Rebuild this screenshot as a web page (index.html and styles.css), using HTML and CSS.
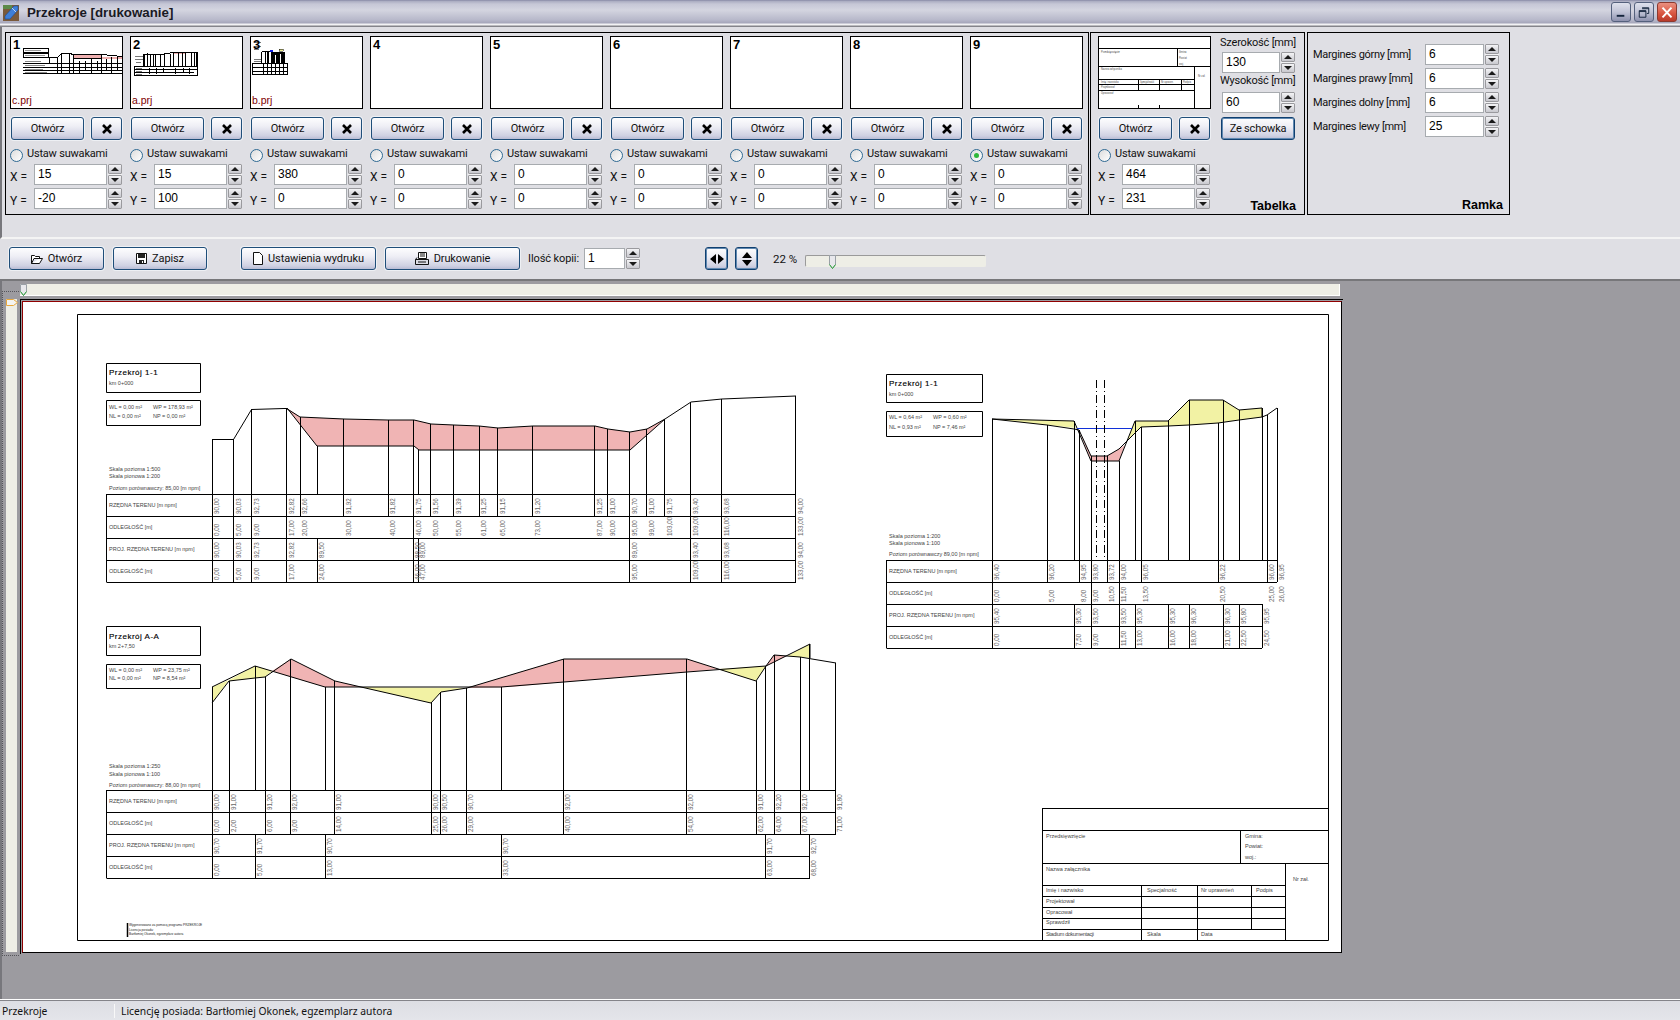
FILE: index.html
```html
<!DOCTYPE html>
<html lang="pl">
<head>
<meta charset="utf-8">
<title>Przekroje [drukowanie]</title>
<link rel="stylesheet" href="styles.css">
</head>
<body>
<header class="titlebar">
  <svg class="appicon" width="16" height="16" viewBox="0 0 16 16"><rect width="16" height="16" fill="#7a5a3c"/><rect x="0" y="0" width="9" height="4" fill="#5c8a4a"/><path d="M2 11 11 1h4v4l-8 9H2z" fill="#3f7fd8" stroke="#1d4a96" stroke-width=".6"/><path d="M9 3l4 4" stroke="#bcd6f6"/></svg>
  <div class="title">Przekroje [drukowanie]</div>
  <div class="winbtns">
    <div class="winbtn"><svg width="19" height="19" viewBox="0 0 19 19"><rect x="5" y="12" width="8" height="2" fill="#14243c"/></svg></div>
    <div class="winbtn"><svg width="19" height="19" viewBox="0 0 19 19"><path d="M7.500 4.500h7v6h-2M4.500 7.500h7v7h-7zM4.500 8.500h7M7.500 5.500h7" fill="none" stroke="#14243c"/></svg></div>
    <div class="winbtn close"><svg width="20" height="19" viewBox="0 0 20 19"><path d="M5 4l10 11M15 4 5 15" stroke="#fff" stroke-width="2.200"/></svg></div>
  </div>
</header>

<section class="panel">
  <div class="group slots">
    <div class="slot">
      <div class="thumb"><svg class="mini" width="111" height="71" viewBox="0 0 111 71"><path d="M62 18h28v3H62zM91 20h20v2H91z" fill="#efb0b0"/><path d="M12.500 11.500h25v4h-25zM12.500 16.500h25v4h-25z" fill="none" stroke="#000"/><path d="M14 13h16M14 18h20" stroke="#999"/><path d="M12 26.500h99M12 30.500h99M12 33.500h99M12 36.500h99M38.500 27V20.500H46.500L50.500 16.500H58.500L62.500 17.500H90.500L111 19.500M62 21.500H90" fill="none" stroke="#000"/><path d="M46.500 20v16M50.500 17v19M58.500 17v19M62.500 18v18M68.500 24v12M74.500 24v10M80.500 22v14M86.500 24v10M90.500 18v18M95.500 22v12M100.500 20v16M106.500 20v14" stroke="#000"/><path d="M14 28h20M14 32h18M14 35h22M14 24h16" stroke="#888"/></svg><b class="num">1</b><span class="name">c.prj</span></div>
      <div class="btnrow"><div class="btn open">Otwórz</div><div class="btn del"><svg width="12" height="12" viewBox="0 0 12 12"><path d="M2 2l8 8M10 2l-8 8" stroke="#000" stroke-width="2.600"/></svg></div></div>
      <div class="radiorow"><span class="radio"></span><span class="rtext">Ustaw suwakami</span></div>
      <div class="coord"><span class="lab">X =</span><div class="input">15</div><div class="spin"><i class="up"></i><i class="dn"></i></div></div>
      <div class="coord"><span class="lab">Y =</span><div class="input">-20</div><div class="spin"><i class="up"></i><i class="dn"></i></div></div>
    </div>
    <div class="slot">
      <div class="thumb"><svg class="mini" width="111" height="71" viewBox="0 0 111 71"><path d="M42 15h12v2H42z" fill="#efb0b0"/><path d="M3.500 29.500h63v9h-63zM3 32.500h64M3 35.500h60M12.500 29V17.500H30.500L42.500 15.500H54.500L60.500 15.500H66.500V29" fill="none" stroke="#000"/><path d="M13.500 17v12M16.500 16v13M19.500 17v12M22.500 17v12M24.500 18v11M29.500 18v11M33.500 17v12M39.500 17v12M42.500 16v13M47.500 16v13M51.500 16v13M54.500 16v13M60.500 16v13M63.500 16v13M65.500 16v13" stroke="#000"/><path d="M5 31h6M5 34h6M5 37h6M4 19h8M4 22h8M5 25h5" stroke="#777"/><path d="M18 31v6M25 31v6M32 31v4M44 31v6M52 31v4M58 31v6" stroke="#000"/></svg><b class="num">2</b><span class="name">a.prj</span></div>
      <div class="btnrow"><div class="btn open">Otwórz</div><div class="btn del"><svg width="12" height="12" viewBox="0 0 12 12"><path d="M2 2l8 8M10 2l-8 8" stroke="#000" stroke-width="2.600"/></svg></div></div>
      <div class="radiorow"><span class="radio"></span><span class="rtext">Ustaw suwakami</span></div>
      <div class="coord"><span class="lab">X =</span><div class="input">15</div><div class="spin"><i class="up"></i><i class="dn"></i></div></div>
      <div class="coord"><span class="lab">Y =</span><div class="input">100</div><div class="spin"><i class="up"></i><i class="dn"></i></div></div>
    </div>
    <div class="slot">
      <div class="thumb"><svg class="mini" width="111" height="71" viewBox="0 0 111 71"><path d="M16 15h18v11H16z" fill="#000"/><path d="M18 15h2v11h-2zM24 18h1v8h-1zM29 17h1v9h-1z" fill="#fff"/><path d="M10.500 14.500h8" stroke="#000"/><path d="M19 14h3" stroke="#1020e0" stroke-width="2"/><path d="M28 12h4v2h-4z" fill="#efef90" stroke="#000" stroke-width=".5"/><path d="M1.500 26.500h35v11h-35zM1 30.500h36M1 34.500h36" fill="none" stroke="#000"/><path d="M10.500 14.500v12M14.500 14.500v12M12 27v10M16 27v10M20 27v10M24 27v10M28 27v10M32 27v10" stroke="#000"/><path d="M3 5h7M3 9h7M3 12h5M3 22h7M3 24h7" stroke="#777"/></svg><b class="num">3</b><span class="name">b.prj</span></div>
      <div class="btnrow"><div class="btn open">Otwórz</div><div class="btn del"><svg width="12" height="12" viewBox="0 0 12 12"><path d="M2 2l8 8M10 2l-8 8" stroke="#000" stroke-width="2.600"/></svg></div></div>
      <div class="radiorow"><span class="radio"></span><span class="rtext">Ustaw suwakami</span></div>
      <div class="coord"><span class="lab">X =</span><div class="input">380</div><div class="spin"><i class="up"></i><i class="dn"></i></div></div>
      <div class="coord"><span class="lab">Y =</span><div class="input">0</div><div class="spin"><i class="up"></i><i class="dn"></i></div></div>
    </div>
    <div class="slot">
      <div class="thumb"><b class="num">4</b></div>
      <div class="btnrow"><div class="btn open">Otwórz</div><div class="btn del"><svg width="12" height="12" viewBox="0 0 12 12"><path d="M2 2l8 8M10 2l-8 8" stroke="#000" stroke-width="2.600"/></svg></div></div>
      <div class="radiorow"><span class="radio"></span><span class="rtext">Ustaw suwakami</span></div>
      <div class="coord"><span class="lab">X =</span><div class="input">0</div><div class="spin"><i class="up"></i><i class="dn"></i></div></div>
      <div class="coord"><span class="lab">Y =</span><div class="input">0</div><div class="spin"><i class="up"></i><i class="dn"></i></div></div>
    </div>
    <div class="slot">
      <div class="thumb"><b class="num">5</b></div>
      <div class="btnrow"><div class="btn open">Otwórz</div><div class="btn del"><svg width="12" height="12" viewBox="0 0 12 12"><path d="M2 2l8 8M10 2l-8 8" stroke="#000" stroke-width="2.600"/></svg></div></div>
      <div class="radiorow"><span class="radio"></span><span class="rtext">Ustaw suwakami</span></div>
      <div class="coord"><span class="lab">X =</span><div class="input">0</div><div class="spin"><i class="up"></i><i class="dn"></i></div></div>
      <div class="coord"><span class="lab">Y =</span><div class="input">0</div><div class="spin"><i class="up"></i><i class="dn"></i></div></div>
    </div>
    <div class="slot">
      <div class="thumb"><b class="num">6</b></div>
      <div class="btnrow"><div class="btn open">Otwórz</div><div class="btn del"><svg width="12" height="12" viewBox="0 0 12 12"><path d="M2 2l8 8M10 2l-8 8" stroke="#000" stroke-width="2.600"/></svg></div></div>
      <div class="radiorow"><span class="radio"></span><span class="rtext">Ustaw suwakami</span></div>
      <div class="coord"><span class="lab">X =</span><div class="input">0</div><div class="spin"><i class="up"></i><i class="dn"></i></div></div>
      <div class="coord"><span class="lab">Y =</span><div class="input">0</div><div class="spin"><i class="up"></i><i class="dn"></i></div></div>
    </div>
    <div class="slot">
      <div class="thumb"><b class="num">7</b></div>
      <div class="btnrow"><div class="btn open">Otwórz</div><div class="btn del"><svg width="12" height="12" viewBox="0 0 12 12"><path d="M2 2l8 8M10 2l-8 8" stroke="#000" stroke-width="2.600"/></svg></div></div>
      <div class="radiorow"><span class="radio"></span><span class="rtext">Ustaw suwakami</span></div>
      <div class="coord"><span class="lab">X =</span><div class="input">0</div><div class="spin"><i class="up"></i><i class="dn"></i></div></div>
      <div class="coord"><span class="lab">Y =</span><div class="input">0</div><div class="spin"><i class="up"></i><i class="dn"></i></div></div>
    </div>
    <div class="slot">
      <div class="thumb"><b class="num">8</b></div>
      <div class="btnrow"><div class="btn open">Otwórz</div><div class="btn del"><svg width="12" height="12" viewBox="0 0 12 12"><path d="M2 2l8 8M10 2l-8 8" stroke="#000" stroke-width="2.600"/></svg></div></div>
      <div class="radiorow"><span class="radio"></span><span class="rtext">Ustaw suwakami</span></div>
      <div class="coord"><span class="lab">X =</span><div class="input">0</div><div class="spin"><i class="up"></i><i class="dn"></i></div></div>
      <div class="coord"><span class="lab">Y =</span><div class="input">0</div><div class="spin"><i class="up"></i><i class="dn"></i></div></div>
    </div>
    <div class="slot">
      <div class="thumb"><b class="num">9</b></div>
      <div class="btnrow"><div class="btn open">Otwórz</div><div class="btn del"><svg width="12" height="12" viewBox="0 0 12 12"><path d="M2 2l8 8M10 2l-8 8" stroke="#000" stroke-width="2.600"/></svg></div></div>
      <div class="radiorow"><span class="radio on"></span><span class="rtext">Ustaw suwakami</span></div>
      <div class="coord"><span class="lab">X =</span><div class="input">0</div><div class="spin"><i class="up"></i><i class="dn"></i></div></div>
      <div class="coord"><span class="lab">Y =</span><div class="input">0</div><div class="spin"><i class="up"></i><i class="dn"></i></div></div>
    </div>
  </div>

  <div class="group tabelka">
    <div class="slot">
      <div class="thumb"><svg class="mini" width="111" height="71" viewBox="0 0 111 71">
        <path d="M0 11.500h111M0 29.500h111M78.500 11v18M95.500 29v41M0 42.500h95M0 47.500h95M0 53.500h95M39.500 42v12M60.500 42v12M82.500 42v12M39.500 68v3M60.500 68v3M95.500 68v3" fill="none" stroke="#000"/>
        <g class="tiny"><text x="2" y="16">Przedsięwzięcie</text><text x="80" y="16">Gmina</text><text x="80" y="22">Powiat</text><text x="80" y="28">woj.</text><text x="2" y="33">Nazwa załącznika</text><text x="99" y="40">Nr zał.</text><text x="2" y="46">Imię i nazwisko</text><text x="41" y="46">Specjalność</text><text x="62" y="46">Nr uprawn.</text><text x="84" y="46">Podpis</text><text x="2" y="51">Projektował</text><text x="2" y="57">Opracował</text></g>
      </svg></div>
      <div class="btnrow"><div class="btn open">Otwórz</div><div class="btn del"><svg width="12" height="12" viewBox="0 0 12 12"><path d="M2 2l8 8M10 2l-8 8" stroke="#000" stroke-width="2.600"/></svg></div></div>
      <div class="radiorow"><span class="radio"></span><span class="rtext">Ustaw suwakami</span></div>
      <div class="coord"><span class="lab">X =</span><div class="input">464</div><div class="spin"><i class="up"></i><i class="dn"></i></div></div>
      <div class="coord"><span class="lab">Y =</span><div class="input">231</div><div class="spin"><i class="up"></i><i class="dn"></i></div></div>
    </div>
    <div class="sizecol">
      <div class="sizelab">Szerokość [mm]</div>
      <div class="sizefield first"><div class="input">130</div><div class="spin"><i class="up"></i><i class="dn"></i></div></div>
      <div class="sizelab">Wysokość [mm]</div>
      <div class="sizefield second"><div class="input">60</div><div class="spin"><i class="up"></i><i class="dn"></i></div></div>
      <div class="btn dflt schowek">Ze schowka</div>
      <div class="caption">Tabelka</div>
    </div>
  </div>

  <div class="group ramka">
    <div class="marg"><span class="marglab">Margines górny [mm]</span><div class="input">6</div><div class="spin"><i class="up"></i><i class="dn"></i></div></div>
    <div class="marg"><span class="marglab">Margines prawy [mm]</span><div class="input">6</div><div class="spin"><i class="up"></i><i class="dn"></i></div></div>
    <div class="marg"><span class="marglab">Margines dolny [mm]</span><div class="input">6</div><div class="spin"><i class="up"></i><i class="dn"></i></div></div>
    <div class="marg"><span class="marglab">Margines lewy [mm]</span><div class="input">25</div><div class="spin"><i class="up"></i><i class="dn"></i></div></div>
    <div class="caption">Ramka</div>
  </div>
</section>

<section class="toolbar">
  <div class="btn tool t-open"><svg width="12" height="12" viewBox="0 0 12 12"><path d="M.5 10.500v-8h3l1 1h4v2M.5 10.500h8l3-5H3z" fill="#fff" stroke="#111"/></svg><span>Otwórz</span></div>
  <div class="btn tool t-save"><svg width="11" height="11" viewBox="0 0 11 11"><path d="M.5.500h10v10H.5z" fill="#fff" stroke="#111"/><path d="M2 1h7v4H2zM3 7h5v3H3z" fill="#222"/><path d="M6 8h1v2H6z" fill="#fff"/></svg><span>Zapisz</span></div>
  <div class="btn tool t-page"><svg width="10" height="13" viewBox="0 0 10 13"><path d="M.5.500h6l3 3v9H.5z" fill="#fff" stroke="#111"/></svg><span>Ustawienia wydruku</span></div>
  <div class="btn tool t-print"><svg width="14" height="13" viewBox="0 0 14 13"><path d="M3.500.500h8v6h-8z" fill="#fff" stroke="#111"/><path d="M5 2h5M5 4h5" stroke="#111"/><path d="M.5 7.500h13v5H.5zM2 5.500l-1.500 2" fill="#dcdce4" stroke="#111"/><path d="M3 10h8" stroke="#111"/></svg><span>Drukowanie</span></div>
  <span class="copies">Ilość kopii:</span>
  <div class="input copyinput">1</div>
  <div class="spin copyspin"><i class="up"></i><i class="dn"></i></div>
  <div class="btn dflt square fit-w"><svg width="14" height="10" viewBox="0 0 14 10"><path d="M6 0v10L0 5zM8 0v10l6-5z" fill="#000"/></svg></div>
  <div class="btn dflt square fit-h"><svg width="10" height="14" viewBox="0 0 10 14"><path d="M0 6h10L5 0zM0 8h10l-5 6z" fill="#000"/></svg></div>
  <span class="zoom">22 %</span>
  <div class="slider"><svg class="sliderthumb" width="7" height="14" viewBox="0 0 7 14"><path d="M.5.500h6v9l-3 4-3-4z" fill="#e8e8ec" stroke="#9aa0a6"/><path d="M.5 9.500l3 4 3-4" fill="none" stroke="#2fa83c"/></svg></div>
</section>

<main class="workspace">
  <div class="guide"></div>
  <div class="hruler"><svg class="hmark" width="7" height="12" viewBox="0 0 7 12"><path d="M.5.500h6v7l-3 4-3-4z" fill="#e8e8ec" stroke="#9aa0a6"/><path d="M.5 7.500l3 4 3-4" fill="none" stroke="#2fa83c"/></svg></div>
  <div class="sheetrow">
    <div class="vruler"><svg class="vmark" width="12" height="7" viewBox="0 0 12 7"><path d="M.5.500h7l4 3-4 3h-7z" fill="#f4f4f0" stroke="#e8a83c"/></svg></div>
    <div class="paper">
      <div class="sheet">
<svg class="drawing" width="1318" height="650" viewBox="23 302 1318 650">
<path class="ln" d="M77.500 314.500H1328.500V940.500H77.500z"/>

<!-- section 1-1 (left, upper) -->
<path class="pink" d="M287 408L300 417 344 419 388 420 414 420 431 424 454 425 479 426 498 428 533 426 595 426 608 429 630 432 647 429 665 419 630 450 419 450 414 446 317 446z"/>
<path class="ln" d="M106.500 363.500H200.500V392.500H106.500zM106.500 400.500H200.500V425.500H106.500z"/>
<path class="ln" d="M212.500 439.500H233.500L251.500 409.500 284 408.500 286.500 408.500 300 417 344 419 388 420 414 420 431 424 454 425 479 426 498 428 533 426 595 426 608 429 630 432 647 429 665 419 691 402 722 399 796 396M287 408L317 446H414L419 450H630L665 419"/>
<path class="ln" d="M212.500 439V538M233.500 439V538M251.500 409V538M286.500 408V538M300.500 417V516M317.500 446V494M343.500 419V516M388.500 420V516M413.500 420V538M418.500 450V494M430.500 424V516M453.500 425V516M479.500 426V516M497.500 428V516M532.500 426V516M594.500 426V516M607.500 429V516M629.500 432V538M646.500 429V516M664.500 419V516M690.500 402V538M721.500 399V538M795.500 396V538"/>
<path class="ln" d="M212.500 538V582M233.500 538V582M251.500 538V582M286.500 538V582M317.500 538V582M413.500 538V582M418.500 538V582M629.500 538V582M690.500 538V582M721.500 538V582M795.500 538V582"/>
<path class="ln" d="M106.500 494.500H796M106.500 516.500H796M106.500 538.500H796M106.500 560.500H796M106.500 582.500H796M106.500 494V582"/>
<g class="head"><text x="109" y="375">Przekrój 1-1</text></g>
<g class="lbl"><text x="109" y="385">km 0+000</text><text x="109" y="409">WL = 0,00 m²</text><text x="153" y="409">WP = 178,93 m²</text><text x="109" y="418">NL = 0,00 m²</text><text x="153" y="418">NP = 0,00 m²</text><text x="109" y="471">Skala pozioma 1:500</text><text x="109" y="478">Skala pionowa 1:200</text><text x="109" y="490">Poziom porównawczy: 85,00 [m npm]</text><text x="109" y="507">RZĘDNA TERENU [m npm]</text><text x="109" y="529">ODLEGŁOŚĆ [m]</text><text x="109" y="551">PROJ. RZĘDNA TERENU [m npm]</text><text x="109" y="573">ODLEGŁOŚĆ [m]</text></g>
<g class="n" transform="translate(1,3)">
<text transform="translate(218,511) rotate(-90)">90,00</text><text transform="translate(240,511) rotate(-90)">90,03</text><text transform="translate(258,511) rotate(-90)">92,73</text><text transform="translate(293,511) rotate(-90)">92,82</text><text transform="translate(306,511) rotate(-90)">92,66</text><text transform="translate(350,511) rotate(-90)">91,92</text><text transform="translate(394,511) rotate(-90)">91,82</text><text transform="translate(420,511) rotate(-90)">91,75</text><text transform="translate(437,511) rotate(-90)">91,56</text><text transform="translate(460,511) rotate(-90)">91,39</text><text transform="translate(485,511) rotate(-90)">91,25</text><text transform="translate(504,511) rotate(-90)">91,15</text><text transform="translate(539,511) rotate(-90)">91,20</text><text transform="translate(601,511) rotate(-90)">91,25</text><text transform="translate(614,511) rotate(-90)">91,00</text><text transform="translate(636,511) rotate(-90)">90,70</text><text transform="translate(653,511) rotate(-90)">91,00</text><text transform="translate(671,511) rotate(-90)">91,75</text><text transform="translate(697,511) rotate(-90)">93,40</text><text transform="translate(728,511) rotate(-90)">93,68</text><text transform="translate(802,511) rotate(-90)">94,00</text>
<text transform="translate(218,533) rotate(-90)">0,00</text><text transform="translate(240,533) rotate(-90)">5,00</text><text transform="translate(258,533) rotate(-90)">9,00</text><text transform="translate(293,533) rotate(-90)">17,00</text><text transform="translate(306,533) rotate(-90)">20,00</text><text transform="translate(350,533) rotate(-90)">30,00</text><text transform="translate(394,533) rotate(-90)">40,00</text><text transform="translate(420,533) rotate(-90)">46,00</text><text transform="translate(437,533) rotate(-90)">50,00</text><text transform="translate(460,533) rotate(-90)">55,00</text><text transform="translate(485,533) rotate(-90)">61,00</text><text transform="translate(504,533) rotate(-90)">65,00</text><text transform="translate(539,533) rotate(-90)">73,00</text><text transform="translate(601,533) rotate(-90)">87,00</text><text transform="translate(614,533) rotate(-90)">90,00</text><text transform="translate(636,533) rotate(-90)">95,00</text><text transform="translate(653,533) rotate(-90)">99,00</text><text transform="translate(671,533) rotate(-90)">103,00</text><text transform="translate(697,533) rotate(-90)">109,00</text><text transform="translate(728,533) rotate(-90)">116,00</text><text transform="translate(802,533) rotate(-90)">133,00</text>
<text transform="translate(218,555) rotate(-90)">90,00</text><text transform="translate(240,555) rotate(-90)">90,03</text><text transform="translate(258,555) rotate(-90)">92,73</text><text transform="translate(293,555) rotate(-90)">92,82</text><text transform="translate(323,555) rotate(-90)">89,50</text><text transform="translate(419,555) rotate(-90)">88,50</text><text transform="translate(424,555) rotate(-90)">89,00</text><text transform="translate(636,555) rotate(-90)">89,00</text><text transform="translate(697,555) rotate(-90)">93,40</text><text transform="translate(728,555) rotate(-90)">93,68</text><text transform="translate(802,555) rotate(-90)">94,00</text>
<text transform="translate(218,577) rotate(-90)">0,00</text><text transform="translate(240,577) rotate(-90)">5,00</text><text transform="translate(258,577) rotate(-90)">9,00</text><text transform="translate(293,577) rotate(-90)">17,00</text><text transform="translate(323,577) rotate(-90)">24,00</text><text transform="translate(419,577) rotate(-90)">46,00</text><text transform="translate(424,577) rotate(-90)">47,00</text><text transform="translate(636,577) rotate(-90)">95,00</text><text transform="translate(697,577) rotate(-90)">109,00</text><text transform="translate(728,577) rotate(-90)">116,00</text><text transform="translate(802,577) rotate(-90)">133,00</text>
</g>

<!-- section A-A (left, lower) -->
<path class="yellow" d="M212 687L229 680 212 703zM229 680L255 666 272 671 265 677 255 678 229 681zM361 687L431 703 441 692 467 688zM718 669L766 666 756 681zM787 656L810 644 810 658z"/>
<path class="pink" d="M272 671L291 659 335 681 361 687 325 687 291 677zM467 688L564 659 687 659 718 669 687 672 564 682 511 687zM766 666L774 655 787 656z"/>
<path class="ln" d="M106.500 626.500H200.500V655.500H106.500zM106.500 664.500H200.500V688.500H106.500z"/>
<path class="ln" d="M212 703L229 681 255 678 265 677 291 659 335 681 361 687 431 703 441 692 467 688 564 659 687 659 756 681 766 666 774 655 800 657 836 663M212 687L255 666 325 687H501L564 682 687 672 766 666 810 644V658"/>
<path class="ln" d="M212.500 687V834M229.500 681V834M255.500 666V790M265.500 677V834M290.500 659V834M325.500 687V790M334.500 681V834M431.500 703V834M440.500 692V834M466.500 688V834M501.500 687V790M563.500 659V834M686.500 659V834M756.500 681V834M765.500 666V790M774.500 655V834M800.500 657V834M809.500 644V790M835.500 663V834"/>
<path class="ln" d="M212.500 834V878M255.500 834V878M325.500 834V878M501.500 834V878M765.500 834V878M809.500 834V878"/>
<path class="ln" d="M106.500 790.500H836M106.500 812.500H836M106.500 834.500H836M106.500 856.500H810M106.500 878.500H810M106.500 790V878"/>
<g class="head"><text x="109" y="639">Przekrój A-A</text></g>
<g class="lbl"><text x="109" y="648">km 2+7,50</text><text x="109" y="672">WL = 0,00 m²</text><text x="153" y="672">WP = 23,75 m²</text><text x="109" y="680">NL = 0,00 m²</text><text x="153" y="680">NP = 8,54 m²</text><text x="109" y="768">Skala pozioma 1:250</text><text x="109" y="776">Skala pionowa 1:100</text><text x="109" y="787">Poziom porównawczy: 88,00 [m npm]</text><text x="109" y="803">RZĘDNA TERENU [m npm]</text><text x="109" y="825">ODLEGŁOŚĆ [m]</text><text x="109" y="847">PROJ. RZĘDNA TERENU [m npm]</text><text x="109" y="869">ODLEGŁOŚĆ [m]</text></g>
<g class="n" transform="translate(1,3)">
<text transform="translate(218,807) rotate(-90)">90,00</text><text transform="translate(235,807) rotate(-90)">91,00</text><text transform="translate(271,807) rotate(-90)">91,20</text><text transform="translate(296,807) rotate(-90)">92,00</text><text transform="translate(340,807) rotate(-90)">91,00</text><text transform="translate(437,807) rotate(-90)">90,00</text><text transform="translate(446,807) rotate(-90)">90,50</text><text transform="translate(472,807) rotate(-90)">90,70</text><text transform="translate(569,807) rotate(-90)">92,00</text><text transform="translate(692,807) rotate(-90)">92,00</text><text transform="translate(762,807) rotate(-90)">91,00</text><text transform="translate(780,807) rotate(-90)">92,20</text><text transform="translate(806,807) rotate(-90)">92,10</text><text transform="translate(841,807) rotate(-90)">91,80</text>
<text transform="translate(218,829) rotate(-90)">0,00</text><text transform="translate(235,829) rotate(-90)">2,00</text><text transform="translate(271,829) rotate(-90)">6,00</text><text transform="translate(296,829) rotate(-90)">9,00</text><text transform="translate(340,829) rotate(-90)">14,00</text><text transform="translate(437,829) rotate(-90)">25,00</text><text transform="translate(446,829) rotate(-90)">26,00</text><text transform="translate(472,829) rotate(-90)">29,00</text><text transform="translate(569,829) rotate(-90)">40,00</text><text transform="translate(692,829) rotate(-90)">54,00</text><text transform="translate(762,829) rotate(-90)">62,00</text><text transform="translate(780,829) rotate(-90)">64,00</text><text transform="translate(806,829) rotate(-90)">67,00</text><text transform="translate(841,829) rotate(-90)">71,00</text>
<text transform="translate(218,851) rotate(-90)">90,70</text><text transform="translate(261,851) rotate(-90)">91,70</text><text transform="translate(331,851) rotate(-90)">90,70</text><text transform="translate(507,851) rotate(-90)">90,70</text><text transform="translate(771,851) rotate(-90)">91,70</text><text transform="translate(815,851) rotate(-90)">92,70</text>
<text transform="translate(218,873) rotate(-90)">0,00</text><text transform="translate(261,873) rotate(-90)">5,00</text><text transform="translate(331,873) rotate(-90)">13,00</text><text transform="translate(507,873) rotate(-90)">33,00</text><text transform="translate(771,873) rotate(-90)">63,00</text><text transform="translate(815,873) rotate(-90)">68,00</text>
</g>
<path d="M127.500 923V937" stroke="#000" stroke-width="1.500"/>
<g class="micro"><text x="129" y="926">Wygenerowano za pomocą programu PRZEKROJE</text><text x="129" y="931">Licencja posiada:</text><text x="129" y="935">Bartłomiej Okonek, egzemplarz autora</text></g>

<!-- section 1-1 (right) -->
<path class="yellow" d="M992 419L1074 421 1076 428 1047 425zM1135 421H1168L1189 400H1223L1239 410 1262 408V417L1239 420 1218 423 1189 425 1168 426 1141 427 1127 441z"/>
<path class="pink" d="M1079 430L1091 456 1107 456 1119 449 1125 445 1119 461H1091z"/>
<path class="ln" d="M886.500 374.500H982.500V402.500H886.500zM886.500 411.500H982.500V436.500H886.500z"/>
<path class="ln" d="M992 419L1047 425 1074 429 1079 430 1091 456 1107 456 1119 449 1127 441 1141 427 1168 426 1189 425 1218 423 1239 420 1262 417 1267 415 1277 408V408M992 419L1074 421 1091 461H1119L1135 421H1168L1189 400H1223L1239 410 1262 408V417"/>
<path d="M1077 428.500H1132" stroke="#1030d8" stroke-width="1" fill="none"/>
<path class="dash" d="M1096.500 380V560M1104.500 380V560"/>
<path class="ln" d="M992.500 419V604M1047.500 425V582M1074.500 421V560M1079.500 430V582M1091.500 456V604M1107.500 456V582M1119.500 461V604M1135.500 421V560M1141.500 427V582M1168.500 421V560M1189.500 400V560M1218.500 423V582M1223.500 400V560M1239.500 410V560M1262.500 408V560M1267.500 415V582M1277.500 408V582"/>
<path class="ln" d="M992.500 604V648M1074.500 604V648M1091.500 604V648M1119.500 604V648M1135.500 604V648M1168.500 604V648M1189.500 604V648M1223.500 604V648M1239.500 604V648M1262.500 604V648"/>
<path class="ln" d="M886.500 560.500H1277M886.500 582.500H1277M886.500 604.500H1262M886.500 626.500H1262M886.500 648.500H1262M886.500 560V648"/>
<g class="head"><text x="889" y="386">Przekrój 1-1</text></g>
<g class="lbl"><text x="889" y="396">km 0+000</text><text x="889" y="419">WL = 0,64 m²</text><text x="933" y="419">WP = 0,60 m²</text><text x="889" y="429">NL = 0,93 m²</text><text x="933" y="429">NP = 7,46 m²</text><text x="889" y="538">Skala pozioma 1:200</text><text x="889" y="545">Skala pionowa 1:100</text><text x="889" y="556">Poziom porównawczy 89,00 [m npm]</text><text x="889" y="573">RZĘDNA TERENU [m npm]</text><text x="889" y="595">ODLEGŁOŚĆ [m]</text><text x="889" y="617">PROJ. RZĘDNA TERENU [m npm]</text><text x="889" y="639">ODLEGŁOŚĆ [m]</text></g>
<g class="n" transform="translate(1,3)">
<text transform="translate(998,577) rotate(-90)">96,40</text><text transform="translate(1053,577) rotate(-90)">96,20</text><text transform="translate(1085,577) rotate(-90)">94,95</text><text transform="translate(1097,577) rotate(-90)">93,80</text><text transform="translate(1113,577) rotate(-90)">93,72</text><text transform="translate(1125,577) rotate(-90)">94,00</text><text transform="translate(1147,577) rotate(-90)">96,05</text><text transform="translate(1224,577) rotate(-90)">96,22</text><text transform="translate(1273,577) rotate(-90)">96,60</text><text transform="translate(1283,577) rotate(-90)">96,95</text>
<text transform="translate(998,599) rotate(-90)">0,00</text><text transform="translate(1053,599) rotate(-90)">5,00</text><text transform="translate(1085,599) rotate(-90)">8,00</text><text transform="translate(1097,599) rotate(-90)">9,00</text><text transform="translate(1113,599) rotate(-90)">10,50</text><text transform="translate(1125,599) rotate(-90)">11,50</text><text transform="translate(1147,599) rotate(-90)">13,50</text><text transform="translate(1224,599) rotate(-90)">20,50</text><text transform="translate(1273,599) rotate(-90)">25,00</text><text transform="translate(1283,599) rotate(-90)">26,00</text>
<text transform="translate(998,621) rotate(-90)">95,40</text><text transform="translate(1080,621) rotate(-90)">95,30</text><text transform="translate(1097,621) rotate(-90)">93,50</text><text transform="translate(1125,621) rotate(-90)">93,50</text><text transform="translate(1141,621) rotate(-90)">95,30</text><text transform="translate(1174,621) rotate(-90)">95,30</text><text transform="translate(1195,621) rotate(-90)">96,30</text><text transform="translate(1229,621) rotate(-90)">96,30</text><text transform="translate(1245,621) rotate(-90)">95,80</text><text transform="translate(1268,621) rotate(-90)">95,95</text>
<text transform="translate(998,643) rotate(-90)">0,00</text><text transform="translate(1080,643) rotate(-90)">7,50</text><text transform="translate(1097,643) rotate(-90)">9,00</text><text transform="translate(1125,643) rotate(-90)">11,50</text><text transform="translate(1141,643) rotate(-90)">13,00</text><text transform="translate(1174,643) rotate(-90)">16,00</text><text transform="translate(1195,643) rotate(-90)">18,00</text><text transform="translate(1229,643) rotate(-90)">21,00</text><text transform="translate(1245,643) rotate(-90)">22,50</text><text transform="translate(1268,643) rotate(-90)">24,50</text>
</g>

<!-- title block -->
<path class="ln" d="M1042.500 808.500H1328.500M1042.500 808V940M1042.500 830.500H1328.500M1042.500 863.500H1328.500M1240.500 830V863M1285.500 863V940M1042.500 885.500H1285M1042.500 896.500H1285M1042.500 907.500H1285M1042.500 918.500H1285M1042.500 929.500H1285M1141.500 885V940M1197.500 885V940M1251.500 885V929"/>
<g class="lbl"><text x="1046" y="838">Przedsięwzięcie</text><text x="1245" y="838">Gmina:</text><text x="1245" y="848">Powiat:</text><text x="1245" y="859">woj.:</text><text x="1046" y="871">Nazwa załącznika</text><text x="1293" y="881">Nr zał.</text><text x="1046" y="892">Imię i nazwisko</text><text x="1147" y="892">Specjalność</text><text x="1201" y="892">Nr uprawnień</text><text x="1256" y="892">Podpis</text><text x="1046" y="903">Projektował</text><text x="1046" y="914">Opracował</text><text x="1046" y="924">Sprawdził</text><text x="1046" y="936" textLength="48">Stadium dokumentacji</text><text x="1147" y="936">Skala</text><text x="1201" y="936">Data</text></g>
</svg>
      </div>
    </div>
  </div>
</main>

<footer class="status"><div class="stcell first">Przekroje</div><div class="stcell">Licencję posiada: Bartłomiej Okonek, egzemplarz autora</div></footer>
</body>
</html>
```
FILE: styles.css
```css
* { box-sizing: border-box; }
html, body { margin: 0; padding: 0; }
body {
  width: 1680px; height: 1020px; overflow: hidden;
  display: flex; flex-direction: column;
  background: #dfdfe4; color: #111;
  font: 11px/14px Roboto, "Liberation Sans", Arial, sans-serif;
  letter-spacing: -.2px;
}

/* title bar */
.titlebar {
  height: 27px; flex: none; display: flex; align-items: center;
  padding: 0 3px 3px 3px;
  background: linear-gradient(#7f819f 0, #a9abc0 1px, #c6c7d6 4px, #d4d5e0 10px, #b7b8ca 20px, #a5a6ba 23px, #f2f2f4 24px, #f2f2f4 25px, #84848a 26px);
}
.appicon { margin-top: 1px; }
.title { margin: 2px 0 0 8px; font: bold 13.300px/16px "Liberation Sans", sans-serif; letter-spacing: 0; color: #1a1a24; }
.winbtns { margin-left: auto; display: flex; gap: 3px; }
.winbtn {
  width: 20px; height: 20px; border: 1px solid #54607c; border-radius: 3px;
  background: linear-gradient(#dfe1ec, #c0c3d6 50%, #8e92ae);
  display: flex; align-items: center; justify-content: center;
}
.winbtn.close { background: linear-gradient(#ea9080, #d8543f 60%, #b83a2a); border-color: #8c3a30; }

/* top panel */
.panel {
  height: 212px; flex: none; display: flex;
  padding: 5px 0 0 3px;
  border-left: 2px solid #77777c;
  border-bottom: 2px solid #f4f4f4;
}
.group { height: 183px; border: 1px solid #000; }
.slots {
  width: 1084px; padding: 3px 5px 0 4px;
  display: grid; grid-template-columns: repeat(9, 113px); column-gap: 7px;
}
.tabelka {
  width: 215px; margin-left: 1px; padding: 3px 8px 1px 7px;
  display: flex; column-gap: 9px;
}
.ramka {
  width: 203px; margin-left: 2px; padding: 11px 6px 2px 5px;
  display: flex; flex-direction: column; row-gap: 3px;
}
.slot { width: 113px; display: flex; flex-direction: column; }
.thumb {
  position: relative; width: 113px; height: 73px; flex: none;
  background: #fff; border: 1px solid #000;
  display: flex; flex-direction: column; justify-content: space-between; align-items: flex-start;
  padding: 1px 0 1px 2px;
  color: #000;
}
.mini { position: absolute; left: 0; top: 0; shape-rendering: crispEdges; }
.num { position: relative; font: bold 13px/14px "Liberation Sans", sans-serif; letter-spacing: 0; }
.name { position: relative; color: #800000; font: 10.500px/13px "Liberation Sans", sans-serif; letter-spacing: 0; margin-left: -1px; }
.tiny text { font-size: 2.600px; fill: #555; letter-spacing: 0; }

.btn {
  height: 23px; display: flex; align-items: center; justify-content: center;
  border: 1px solid #1f4e79; border-radius: 3px;
  background: linear-gradient(#fdfdfe, #eeeef5 40%, #cfd1e2 85%, #b9bcd4);
  box-shadow: 0 0 0 1px #eef0f4;
}
.btn.dflt { border-color: #0f3f70; box-shadow: inset 0 0 0 1px #5f88b0; }
.btnrow { display: flex; justify-content: space-between; margin-top: 8px; padding: 0 1px; }
.open { width: 73px; }
.del { width: 31px; }
.radiorow { display: flex; align-items: center; column-gap: 4px; margin-top: 9px; height: 12px; }
.rtext { margin-top: -2px; }
.radio {
  width: 13px; height: 13px; flex: none; border-radius: 50%;
  border: 1px solid #2f6a93; background: linear-gradient(135deg, #dcdcdc, #fff);
  position: relative;
}
.radio.on::after {
  content: ""; position: absolute; left: 3px; top: 3px; width: 5px; height: 5px;
  border-radius: 50%; background: #2eb83a;
}
.coord { display: flex; align-items: flex-end; height: 21px; margin-top: 3px; }
.lab { width: 24px; flex: none; font-size: 12px; line-height: 14px; margin-bottom: 1px; letter-spacing: 0; }
.input {
  width: 73px; height: 21px; flex: none;
  border: 1px solid #a7abaf; background: #fff;
  padding-left: 3px; font: 12px/18px "Liberation Sans", sans-serif; letter-spacing: 0; color: #000;
}
.spin { width: 14px; height: 21px; flex: none; margin-left: 1px; display: flex; flex-direction: column; row-gap: 1px; background: #f2f2f4; }
.spin i {
  flex: 1; display: flex; align-items: center; justify-content: center;
  border: 1px solid #9a9a9e; border-radius: 1px;
  background: linear-gradient(#f4f4f6, #c8c8ce);
}
.spin i::before { content: ""; border-left: 4px solid transparent; border-right: 4px solid transparent; }
.spin .up::before { border-bottom: 4px solid #1a1a1a; }
.spin .dn::before { border-top: 4px solid #1a1a1a; }

.sizecol { flex: 1; display: flex; flex-direction: column; align-items: flex-start; width: 76px; }
.sizelab { height: 14px; white-space: nowrap; }
.sizefield { display: flex; margin-left: 2px; }
.sizefield .input { width: 58px; }
.sizefield.first { margin-top: 2px; margin-bottom: 1px; }
.sizefield.second { margin-top: 4px; }
.schowek { width: 74px; margin: 4px 0 0 1px; }
.caption { margin-top: auto; align-self: flex-end; font: bold 12.500px/14px "Liberation Sans", sans-serif; letter-spacing: 0; color: #000; }
.marg { display: flex; height: 21px; align-items: center; }
.marglab { width: 112px; flex: none; white-space: nowrap; letter-spacing: -.3px; }
.marg .input { width: 59px; }

/* toolbar */
.toolbar {
  height: 40px; flex: none; display: flex; align-items: flex-start;
  padding: 8px 0 0 9px;
}
.tool { column-gap: 5px; letter-spacing: -.1px; }
.t-open { width: 95px; }
.t-save { width: 94px; margin-left: 9px; }
.t-page { width: 135px; margin-left: 34px; }
.t-print { width: 135px; margin-left: 9px; }
.copies { margin-left: 8px; line-height: 23px; width: 56px; flex: none; white-space: nowrap; letter-spacing: -.1px; }
.copyinput { width: 41px; margin-top: 1px; }
.copyspin { margin-top: 1px; }
.square { width: 23px; }
.fit-w { margin-left: 65px; }
.fit-h { margin-left: 7px; }
.zoom { margin-left: 15px; width: 32px; flex: none; line-height: 24px; font-size: 11.500px; letter-spacing: 0; }
.slider {
  position: relative; width: 181px; height: 12px; margin-top: 8px;
  background: #eeeee6; border: 1px solid #9a9a9a; border-color: #9a9a9a #eeeee6 #eeeee6 #9a9a9a; border-radius: 2px;
}
.sliderthumb { position: absolute; left: 23px; top: -1px; }

/* workspace */
.workspace {
  position: relative; flex: 1; background: #9c9ba0;
  border-top: 2px solid #77777a; border-left: 2px solid #77777c;
  padding-top: 3px;
}
.guide {
  position: absolute; left: 0; top: 10px; width: 17px; height: 665px;
  border: 1px dotted #55555a; border-right: 0;
}
.hruler {
  position: relative; margin-left: 18px; width: 1320px; height: 12px;
  background: #eeeee6; border-right: 1px solid #fff; border-bottom: 1px solid #fff;
}
.hmark { position: absolute; left: 0; top: 0; }
.sheetrow { display: flex; margin-top: 3px; }
.vruler {
  position: relative; margin-left: 4px; width: 11px; height: 653px;
  background: #eeeee6;
}
.vmark { position: absolute; left: 0; top: 0; }
.paper {
  margin-left: 3px; width: 1323px; height: 655px;
  border-top: 1px solid #000; border-left: 1px solid #000;
  padding: 1px 0 0 1px;
}
.sheet {
  width: 1320px; height: 652px; background: #fff;
  border-top: 1px solid #900000; border-left: 1px solid #900000;
  border-right: 1px solid #000; border-bottom: 1px solid #000;
}
.drawing { display: block; font-family: "Liberation Sans", sans-serif; letter-spacing: 0; }
.ln { fill: none; stroke: #000; stroke-width: 1; }
.pink { fill: #f0b4b4; }
.yellow { fill: #f2f2a4; }
.dash { fill: none; stroke: #000; stroke-width: 1; stroke-dasharray: 8 3 1 3; }
.head text { font-size: 8px; letter-spacing: .5px; fill: #000; stroke: #000; stroke-width: .15px; }
.lbl text { font-size: 5.500px; fill: #444; }
.n text { font-size: 6.300px; fill: #666; }
.micro text { font-size: 3.200px; fill: #222; }

/* status bar */
.status {
  height: 21px; flex: none; display: flex; align-items: center;
  background: linear-gradient(#dcdde3, #e4e5ea);
  box-shadow: inset 0 1px 0 #fff, inset 0 2px 0 #84848a;
  font: 10.300px/14px "Noto Sans", "Liberation Sans", sans-serif; letter-spacing: 0; color: #111;
  padding-top: 3px;
}
.stcell { padding-left: 6px; }
.stcell.first { width: 115px; padding-left: 2px; border-right: 1px solid #f8f8f8; }
```
